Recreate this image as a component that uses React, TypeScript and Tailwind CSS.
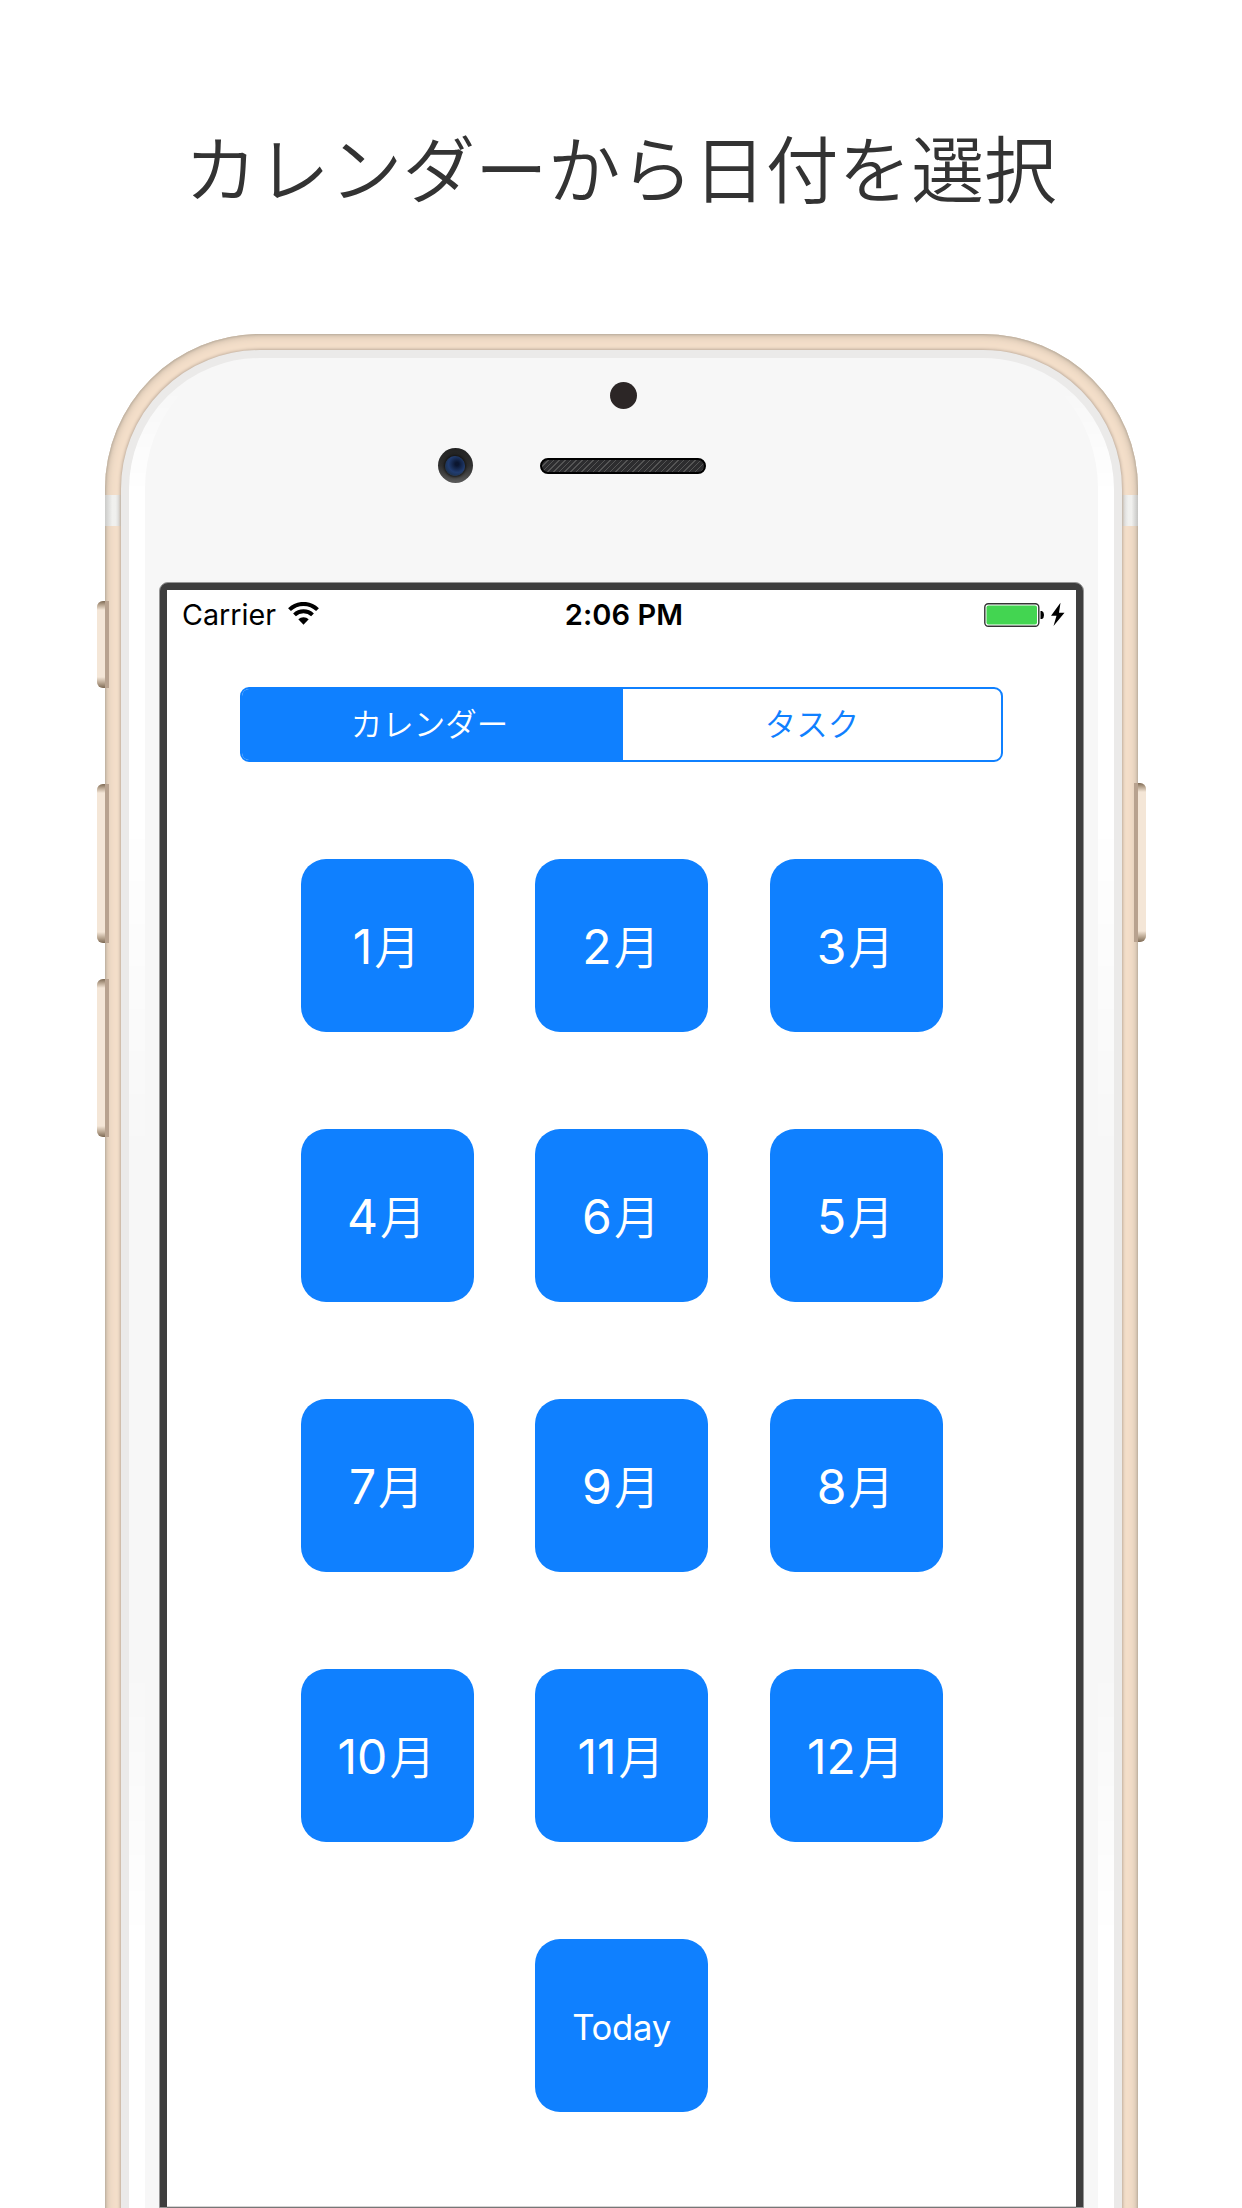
import React from "react";

const BUTTON_ROWS: string[][] = [
  ["1月", "2月", "3月"],
  ["4月", "6月", "5月"],
  ["7月", "9月", "8月"],
  ["10月", "11月", "12月"],
];

function Tile({ label, small = false }: { label: string; small?: boolean }) {
  const month = label.endsWith("月");
  return (
    <button
      className={
        small
          ? "flex h-[173px] w-[173px] items-center justify-center rounded-[25px] bg-[#0f80ff] pt-1 text-[34.700px] leading-none tracking-[-0.3px] text-white"
          : "flex h-[173px] w-[173px] items-center justify-center rounded-[25px] bg-[#0f80ff] pr-px text-[48px] leading-none text-white"
      }
    >
      {month ? (
        <span className="flex items-baseline">
          <span>{label.slice(0, -1)}</span>
          <span className="ml-0.5 font-['Noto_Sans_CJK_JP',sans-serif] text-[46px] font-[350]">月</span>
        </span>
      ) : (
        label
      )}
    </button>
  );
}

function SideButton({ className }: { className: string }) {
  return (
    <div className={`absolute w-3 overflow-hidden bg-[#f4e6d7] ${className}`}>
      <div className="h-full w-full bg-[linear-gradient(180deg,#7d6a55_0,#b8a590_4px,rgba(244,230,215,0)_9px,rgba(244,230,215,0)_calc(100%-11px),#b8a590_calc(100%-5px),#7d6a55_100%)]" />
    </div>
  );
}

function StatusBar() {
  return (
    <div className="grid h-[49px] grid-cols-[1fr_auto_1fr] items-center pr-[10px] pl-[15px] text-[29px] leading-none text-black">
      <div className="flex items-center gap-3">
        <span className="pt-0.5 text-[28.700px]">Carrier</span>
        <svg width="31" height="24" viewBox="0 0 31 24" fill="none" stroke="#000">
          <path d="M1.5 7.6 A20 20 0 0 1 29.500 7.6" strokeWidth="4" />
          <path d="M6.5 12.9 A13 13 0 0 1 24.500 12.9" strokeWidth="4" />
          <path d="M15.500 22.700 L10.300 17.300 A7.500 7.500 0 0 1 20.700 17.300 Z" fill="#000" stroke="none" />
        </svg>
      </div>
      <div className="text-center font-semibold tracking-[0.1px]">2:06 PM</div>
      <div className="flex items-center justify-end">
        <svg width="82" height="26" viewBox="0 0 82 26">
          <rect x="0.800" y="1.800" width="54" height="22.400" rx="3.500" fill="#fff" stroke="#333" strokeWidth="1.400" />
          <rect x="2.500" y="3.500" width="50.500" height="19" rx="2" fill="#43d551" />
          <path d="M56.500 9 h1.500 q2 1 2 4 t-2 4 h-1.500z" fill="#000" />
          <path d="M76.500 0.800 L67 13.800 H72.500 L69.500 24 L80.500 10.800 H75z" fill="#000" />
        </svg>
      </div>
    </div>
  );
}

export default function App() {
  return (
    <main className="h-[2208px] w-[1242px] overflow-hidden bg-white font-['Inter','Noto_Sans_CJK_JP',sans-serif]">
      <h1 className="flex h-[334px] items-center justify-center pr-px pb-0.5 font-['Noto_Sans_CJK_JP',sans-serif] text-[72.700px] leading-none font-[350] text-[#333]">
        カレンダーから日付を選択
      </h1>

      <div className="relative ml-[105px] h-[2400px] w-[1033px] rounded-[155px] bg-[#f3dec9] p-4 shadow-[inset_0_0_2px_1px_#bcaf9f,inset_0_0_7px_2px_#c9b9a7]">
        {/* antenna bands */}
        <div className="absolute top-[161px] left-0 h-[31px] w-4 bg-[linear-gradient(90deg,#cbcbc9,#f0f0ee_45%,#f0f0ee_65%,#d8d8d6)]" />
        <div className="absolute top-[161px] right-0 h-[31px] w-4 bg-[linear-gradient(90deg,#d8d8d6,#f0f0ee_40%,#f0f0ee_60%,#c4c4c2)]" />

        <SideButton className="top-[267px] -left-2 h-[87px] rounded-l-[6px] [&>div]:shadow-[inset_-4px_0_0_#b8a28f]" />
        <SideButton className="top-[450px] -left-2 h-[159px] rounded-l-[6px] [&>div]:shadow-[inset_-4px_0_0_#b8a28f]" />
        <SideButton className="top-[645px] -left-2 h-[158px] rounded-l-[6px] [&>div]:shadow-[inset_-4px_0_0_#b8a28f]" />
        <SideButton className="top-[449px] -right-2 h-[159px] rounded-r-[6px] [&>div]:shadow-[inset_4px_0_0_#b8a28f]" />

        <div className="relative h-full rounded-[139px] border-8 border-[#ebeae9] bg-[#f7f7f7] shadow-[0_0_3px_1px_#bfad9d]">
          {/* glass reflection along both edges */}
          <div className="absolute inset-0 rounded-[131px] border-x-[16px] border-white [mask-image:linear-gradient(180deg,transparent_25px,#000_140px,#000_440px,transparent_820px,transparent_1290px,#000_1600px)]" />

          <div className="relative flex h-[224px] flex-col items-center pt-6 pl-1">
            <div className="h-[27px] w-[27px] rounded-full bg-[#2c2626]" />
            <div className="mt-[39px] mr-1 flex w-[368px] items-center gap-[67px]">
              <div className="flex h-[35px] w-[35px] shrink-0 items-center justify-center rounded-full bg-[linear-gradient(180deg,#222,#303030_50%,#5a5a5a)]">
                <div className="h-5 w-5 rounded-full bg-[radial-gradient(circle_at_60%_40%,#0b1630_10%,#213c70_50%,#1c3048_80%)] shadow-[0_0_3px_1px_#111]" />
              </div>
              <div className="h-4 w-[166px] shrink-0 rounded-full border-2 border-black bg-[#333] bg-[repeating-linear-gradient(135deg,#555_0_1px,#2d2d2f_1px_4px)]" />
            </div>
          </div>

          <div className="relative ml-[30px] h-[1626px] w-[925px] rounded-t-[9px] border border-[#969696] bg-[#3e3e3e] px-[7px] pt-[7px]">
            <div className="h-[1616px] bg-white">
              <StatusBar />

              <div className="mt-12 ml-[73px] flex h-[75px] w-[763px] overflow-hidden rounded-[9px] border-2 border-[#0f80ff] bg-white font-['Noto_Sans_CJK_JP',sans-serif] text-[31.500px] font-[350]">
                <div className="flex w-[381px] items-center justify-center bg-[#0f80ff] pr-1.5 pb-1 text-white">カレンダー</div>
                <div className="flex flex-1 items-center justify-center pb-1 text-[#0f80ff]">タスク</div>
              </div>

              <div className="mt-[97px] flex flex-col gap-[97px] pl-[133.500px]">
                {BUTTON_ROWS.map((row) => (
                  <div key={row[0]} className="flex gap-[61.500px]">
                    {row.map((label) => (
                      <Tile key={label} label={label} />
                    ))}
                  </div>
                ))}
                <div className="flex pl-[234.500px]">
                  <Tile label="Today" small />
                </div>
              </div>
            </div>
            <div className="h-px bg-[#d5d3d3]" />
            <div className="h-px bg-[#777]" />
          </div>
        </div>
      </div>
    </main>
  );
}
